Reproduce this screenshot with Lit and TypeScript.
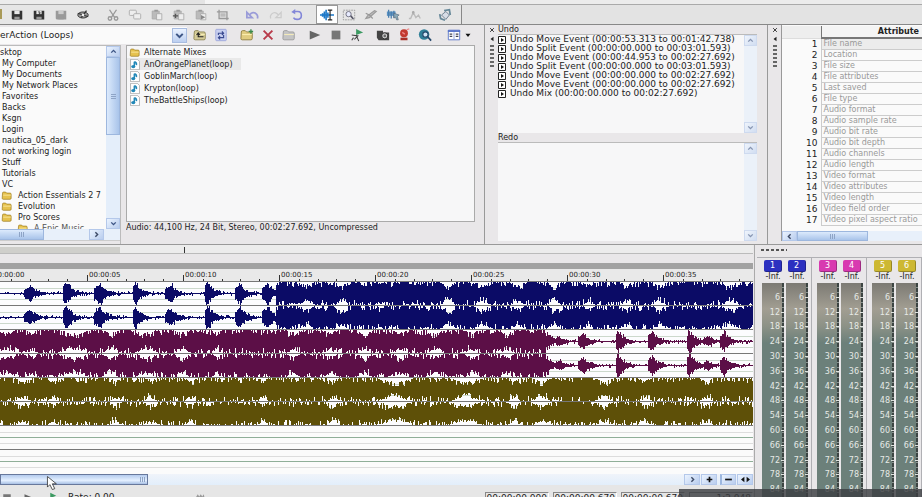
import { LitElement, html, svg, css } from "lit";
import { customElement } from "lit/decorators.js";

const folder = (c = "#e6c24e", e = "#9a7a1e") => svg`<path d="M1.5 4.5q0-1.5 1.5-1.5h3l1.500 1.500h5q1.500 0 1.500 1.500v6q0 1.500-1.500 1.500h-10q-1.500 0-1.500-1.500z" fill=${c} stroke=${e}/><path d="M2.500 7.500h11" stroke="#fff4b8"/>`;
const floppy = (c: string, l = "#e8e8e8") => svg`<path d="M2 3h12v10H3l-1-1z" fill=${c}/><path d="M5 3h6v4H5z" fill=${l}/><path d="M5 10h6v3H5z" fill="#999"/>`;
const clip = svg`<path d="M2.500 3.500h8v9h-8z" fill="#bbb" stroke="#aaa"/><path d="M5 2h4v2H5z" fill="#999"/><path d="M7.500 6.500h6v7h-6z" fill="#eee" stroke="#aaa"/>`;

const ICONS: Record<string, unknown> = {
  folder: folder(),
  save: floppy("#333"),
  saveAs: svg`${floppy("#333")}<path d="M7 4.500h2v2H8v2" stroke="#333" fill="none"/>`,
  saveOff: floppy("#999", "#ccc"),
  render: svg`<ellipse cx="8" cy="8" rx="6" ry="3.500" fill="#999" stroke="#333"/><path d="M2 6l12 4M6 11l6-8" stroke="#333" stroke-width="1.500"/><circle cx="8" cy="8" r="1.500" fill="#eee"/>`,
  cut: svg`<path d="M4 2l6 9M12 2L6 11" stroke="#999" stroke-width="1.500"/><circle cx="4.500" cy="12" r="2" fill="none" stroke="#999" stroke-width="1.500"/><circle cx="11.500" cy="12" r="2" fill="none" stroke="#999" stroke-width="1.500"/>`,
  copy: svg`<rect x="1.500" y="2.500" width="8" height="6" rx="1" fill="#eee" stroke="#aaa"/><rect x="6.500" y="6.500" width="8" height="6" rx="1" fill="#eee" stroke="#aaa"/>`,
  paste: clip,
  pasteMix: svg`${clip}<path d="M1 9h6M4 6.500v5" stroke="#555" stroke-width="1.500"/>`,
  pastePlay: svg`${clip}<path d="M8 8l5 2.500L8 13z" fill="#888"/>`,
  trim: svg`<path d="M3.500 2v10h11M1 4.500h11.500V14" fill="none" stroke="#999" stroke-width="1.500"/><path d="M5 6h6v4H5z" fill="#bbb"/>`,
  undo: svg`<path d="M1 5v6h6zM4 8q4-5 8-1 2 2 1 5" fill="none" stroke="#9a9cd8" stroke-width="2"/>`,
  redo: svg`<path d="M15 5v6H9zM12 8q-4-5-8-1-2 2-1 5" fill="none" stroke="#ccc" stroke-width="1.500"/>`,
  revert: svg`<path d="M5 4h4q4 0 4 4.500T8 13q-3 0-4-2" fill="none" stroke="#8286d8" stroke-width="1.800"/><path d="M1.500 4.500L6 1v6z" fill="#8286d8"/>`,
  select: svg`<path d="M0 8h16M3 6v4M5 4v8M7 2v12M9 5v6" stroke="#1d78c8" stroke-width="1.800"/><path d="M9 2.500h5M11.500 2.500v11M9 13.500h5" stroke="#222" stroke-width="1.300"/>`,
  zoom: svg`<rect x="1.500" y="2.500" width="13" height="11" fill="none" stroke="#999" stroke-dasharray="2 1"/><circle cx="7.500" cy="7" r="3" fill="#e8ecff" stroke="#667"/><path d="M10 9l3 3.500" stroke="#556" stroke-width="1.800"/>`,
  pencil: svg`<path d="M2 12l4-1 8-7-2-1-8 6zM2 6l4 2 4 4" fill="#bbb" stroke="#999" stroke-width="1.300"/>`,
  event: svg`<path d="M1 4h10v5H1z" fill="#5b93c4"/><path d="M3 2v9M6 4v8M9 3v8" stroke="#4a7fae" stroke-width="1.500"/><path d="M9 6l6 2-2 1.500 1 4h-2l-1-3-2 1z" fill="#8ab" stroke="#567" stroke-width=".7"/>`,
  envelope: svg`<path d="M1 12h2l3-7 3 6 3-3 2 4" fill="none" stroke="#bbb" stroke-width="1.500"/><circle cx="6" cy="5" r="1.500" fill="#aaa"/>`,
  script: svg`<path d="M4 8l5-4 4 4-4 5z" fill="#d7dde6" stroke="#678"/><path d="M2 7l1 5 5 2M7 3l6-1 1 6" fill="none" stroke="#689" stroke-width="2"/>`,
  up: svg`${folder("#d4cb98", "#8a8250")}<path d="M12 10H6V6M4 8l2-2.500L8 8" fill="none" stroke="#222" stroke-width="1.300"/>`,
  refresh: svg`<rect x="2" y="1.500" width="12" height="13" rx="1" fill="#c9d0f0" stroke="#9aa5dc"/><path d="M5 8V6h6M9 4l2 2-2 2M11 8v3H5M7 9l-2 2 2 2" fill="none" stroke="#3a4a90" stroke-width="1.300"/>`,
  newFolder: svg`${folder("#e0cc80", "#8c7a3a")}<path d="M10 4h5M12.500 1.500v5" stroke="#3a8a4a" stroke-width="1.500"/>`,
  remove: svg`<path d="M3 3l10 10M13 3L3 13" stroke="#b83a4a" stroke-width="2.200"/>`,
  folderOff: folder("#c4c4c4", "#999"),
  play: svg`<path d="M2 3l12 5-12 5z" fill="#666"/>`,
  stop: svg`<path d="M3 3h10v10H3z" fill="#777"/>`,
  autoPlay: svg`<path d="M7 1l8 4-8 3z" fill="#3c9a62"/><path d="M2 8l7 1-4 4M7 8l3 7M4 11l-2 3" fill="none" stroke="#444" stroke-width="1.200"/>`,
  camera: svg`<path d="M1 3h7v2h7v9H3L1 11z" fill="#444"/><circle cx="10" cy="9" r="3.500" fill="#ccc" stroke="#222"/><circle cx="10" cy="9" r="1.500" fill="#666"/>`,
  badge: svg`<circle cx="8" cy="6" r="4.500" fill="#c23a30"/><path d="M4 11h8v3H4z" fill="#a83028"/><path d="M11 2l3-1M6 5l3 2" stroke="#e88" stroke-width="1.500"/>`,
  web: svg`<circle cx="7" cy="7.500" r="6" fill="#2f7f98"/><circle cx="8.500" cy="7.500" r="3" fill="#cfe3f5" stroke="#24486a" stroke-width="1.300"/><path d="M11 10l4 4.500" stroke="#24486a" stroke-width="2"/>`,
  views: svg`<path d="M1.500 2.500h13v11h-13z" fill="#fff" stroke="#5570c8"/><path d="M1 3.500h14" stroke="#5570c8" stroke-width="2"/><path d="M3 7h3M3 9.500h3M10 7h3M10 9.500h3" stroke="#445" stroke-width="1.500"/><path d="M8 5v8" stroke="#8a9ad8"/>`,
  drop: svg`<path d="M4 6h8l-4 5z" fill="#111"/>`,
  note: svg`<path d="M1.500 .5h10l3 3v12h-13z" fill="#fff" stroke="#999"/><path d="M7 4v6M7 4q4 1 3 5" fill="none" stroke="#2288b8" stroke-width="2.200"/><ellipse cx="5.500" cy="11" rx="3" ry="2.300" fill="#2288b8"/>`,
  down: svg`<path d="M4 6l4 4 4-4" fill="none" stroke="#3d5585" stroke-width="2.500"/>`,
  upArrow: svg`<path d="M4 10l4-4 4 4" fill="none" stroke="#3d5585" stroke-width="2.500"/>`,
  left: svg`<path d="M10 4L6 8l4 4" fill="none" stroke="#3d4a65" stroke-width="2.500"/>`,
  right: svg`<path d="M6 4l4 4-4 4" fill="none" stroke="#3d4a65" stroke-width="2.500"/>`,
  plus: svg`<path d="M8 3v10M3 8h10" stroke="#111" stroke-width="3"/>`,
  minus: svg`<path d="M2 8h12" stroke="#111" stroke-width="3"/>`,
  both: svg`<path d="M6 3v10L0 8zM10 3v10l6-5z" fill="#111"/>`,
  entry: svg`<path d="M1 1h14v14H1z" fill="#fff" stroke="#222" stroke-width="2"/><path d="M6 4l6 4-6 4z" fill="#111"/>`,
  close: svg`<path d="M3 3l10 10M13 3L3 13" stroke="#333" stroke-width="2.500"/>`,
  pin: svg`<path d="M12 2v12L4 8z" fill="#222"/>`,
  pointer: svg`<path d="M3 0v13l3-3 3 6 3-1-3-6h5z" fill="#fff" stroke="#333"/>`,
  shuttle: svg`<path d="M0 16l2-8 3-5 2 3 2-3 2 3 2-3 3 13z" fill="#999"/>`,
};

const icon = (name: string) => html`<svg class="icon" viewBox="0 0 16 16" aria-hidden="true">${ICONS[name]}</svg>`;
const tool = (name: string, cls = "") => html`<button class="tool ${cls}" aria-label=${name}>${icon(name)}</button>`;

const TREE = ["My Computer", "My Documents", "My Network Places", "Favorites", "Backs", "Ksgn", "Login", "nautica_05_dark", "not working login", "Stuff", "Tutorials", "VC"];
const FOLDERS = ["Action Essentials 2 7", "Evolution", "Pro Scores"];
const FILES = ["AnOrangePlanet(loop)", "GoblinMarch(loop)", "Krypton(loop)", "TheBattleShips(loop)"];
const UNDO = [
  "Undo Move Event (00:00:53.313 to 00:01:42.738)",
  "Undo Split Event (00:00:00.000 to 00:03:01.593)",
  "Undo Move Event (00:00:44.953 to 00:02:27.692)",
  "Undo Split Event (00:00:00.000 to 00:03:01.593)",
  "Undo Move Event (00:00:00.000 to 00:02:27.692)",
  "Undo Move Event (00:00:00.000 to 00:02:27.692)",
  "Undo Mix (00:00:00.000 to 00:02:27.692)",
];
const ATTRIBUTES = ["File name", "Location", "File size", "File attributes", "Last saved", "File type", "Audio format", "Audio sample rate", "Audio bit rate", "Audio bit depth", "Audio channels", "Audio length", "Video format", "Video attributes", "Video length", "Video field order", "Video pixel aspect ratio"];
const TIMES = ["00:00:00", "00:00:05", "00:00:10", "00:00:15", "00:00:20", "00:00:25", "00:00:30", "00:00:35"];
const LEVELS = Array.from({ length: 14 }, (_, i) => (i + 1) * 6);
const METERS = [
  { tone: "blue", ids: [1, 2] },
  { tone: "pink", ids: [3, 4] },
  { tone: "gold", ids: [5, 6] },
];

/* A hit starts at `from`, is loudest at `at`, then decays. */
type Hit = [from: number, at: number, level: number];
/* A dip lowers a loud passage around `at`. */
type Dip = [at: number, width: number, depth: number];
interface Track { color: string; loud: [number, number]; hits: Hit[]; dips: Dip[] }

const WIDTH = 753;
const TRACKS: Track[] = [
  {
    color: "#0b0b66",
    loud: [276, WIDTH],
    hits: [[24, 30, 0.7], [63, 66, 1.1], [94, 100, 0.95], [133, 135, 1.1], [165, 171, 0.8], [205, 207, 1.2], [235, 240, 0.95], [262, 268, 0.95]],
    dips: [[306, 6, 0.45], [341, 5, 0.5], [380, 4, 0.2], [448, 6, 0.55], [482, 6, 0.45], [518, 6, 0.35], [554, 5, 0.55], [588, 5, 0.35], [626, 5, 0.4], [659, 5, 0.5], [730, 7, 0.5]],
  },
  {
    color: "#5c0f47",
    loud: [0, 546],
    hits: [[546, 547, 0.8], [556, 560, 0.3], [578, 583, 0.7], [616, 618, 1.1], [648, 652, 0.9], [687, 689, 1.1], [704, 708, 0.4], [720, 724, 0.8]],
    dips: [[6, 8, 0.45], [32, 4, 0.35], [74, 11, 0.5], [110, 6, 0.5], [146, 8, 0.45], [182, 6, 0.45], [216, 4, 0.35], [293, 6, 0.35], [330, 6, 0.35], [364, 6, 0.45], [400, 6, 0.4], [435, 6, 0.4], [472, 6, 0.4], [507, 5, 0.4]],
  },
  {
    color: "#5e5008",
    loud: [0, WIDTH],
    hits: [],
    dips: [[22, 6, 0.35], [53, 5, 0.3], [115, 5, 0.35], [150, 6, 0.3], [190, 5, 0.35], [263, 4, 0.4], [333, 5, 0.4], [395, 13, 0.55], [466, 12, 0.5], [514, 5, 0.35], [541, 7, 0.45], [604, 7, 0.4], [645, 6, 0.3], [706, 6, 0.35]],
  },
];

/* Small seeded generator, so each channel always has the same shape. */
function noise(seed: number): () => number {
  let s = seed;
  return () => {
    s = (s + 0x6d2b79f5) | 0;
    let t = Math.imul(s ^ (s >>> 15), 1 | s);
    t = (t + Math.imul(t ^ (t >>> 7), 61 | t)) ^ t;
    return ((t ^ (t >>> 14)) >>> 0) / 4294967296;
  };
}

function wavePath(t: Track, seed: number): string {
  const rnd = noise(seed);
  const level = (x: number) => {
    if (x >= t.loud[0] && x < t.loud[1]) {
      let a = 1.05 - 0.45 * rnd() ** 3;
      for (const [at, w, d] of t.dips) a -= d * Math.exp(-(((x - at) / w) ** 2)) * (0.5 + 0.6 * rnd());
      return Math.min(Math.max(a, 0.3), 1);
    }
    let a = 0.05 + 0.16 * rnd() ** 3;
    for (const [from, at, l] of t.hits) {
      if (x >= from && x <= at) a += l * (0.4 + (0.6 * (x - from + 1)) / (at - from + 1)) * (0.7 + 0.3 * rnd());
      else if (x > at && x < at + 34) a += l * Math.exp((at - x) / 6) * (0.5 + 0.6 * rnd());
    }
    return Math.min(a, 1);
  };
  let d = "";
  for (let x = 0; x < WIDTH; x++) {
    const top = Math.round(12 - level(x) * 12);
    const bottom = Math.max(Math.round(12 + level(x) * 12), top + 1);
    d += `M${x} ${top}h1V${bottom}h-1z`;
  }
  return d;
}

const CHANNELS = TRACKS.flatMap((t, i) => [0, 1].map((c) => ({ color: t.color, d: wavePath(t, 71 + i * 37 + c * 11) })));

@customElement("app-root")
export class AppRoot extends LitElement {
  static styles = css`
    :host { display: grid; grid-template-rows: 4px 21px minmax(0, 220fr) minmax(0, 252fr); height: 100vh; position: relative; overflow: hidden; background: #e9e7e9; color: #222; font: 8px/11px "DejaVu Sans", sans-serif; }
    * { box-sizing: border-box; }
    ul, ol { list-style: none; margin: 0; padding: 0; }
    button { font: inherit; color: inherit; padding: 0; margin: 0; border: 0; background: none; display: flex; align-items: center; justify-content: center; }
    .icon { width: 14px; height: 14px; display: block; flex: none; }
    .menu { background: linear-gradient(90deg, #ececec 130px, #fafafa 130px, #fafafa 170px, #e4e4e4 170px, #e4e4e4 205px, #f4f4f4 205px, #f4f4f4 310px, #ececec 310px); }
    .bar { display: flex; background: #e3e3e3; border-top: 1px solid #aaa; border-bottom: 1px solid #888; }
    .tools { display: flex; gap: 8px; padding-right: 5px; border-right: 1px solid #888; background: #e6e6e6; }
    .group { display: flex; }
    .edge { width: 2px; height: 10px; margin: 4px 4px 0 0; background: #a99a58; }
    .lead { display: flex; }
    .tool { width: 22px; }
    .on { border: 1px solid #999; background: #fff; }
    .main { display: grid; grid-template-columns: minmax(0, 485fr) minmax(0, 283fr) minmax(0, 154fr); grid-template-rows: minmax(0, 1fr); border-bottom: 1px solid #999; min-height: 0; }

    .explorer { display: grid; grid-template-rows: 20px minmax(0, 1fr); border-right: 1px solid #999; padding-right: 9px; min-height: 0; }
    .address { display: flex; gap: 5px; align-items: center; }
    .address .tool { width: 21px; }
    .combo { position: relative; width: 187px; height: 17px; flex: none; margin-right: -3px; }
    .combo select { appearance: none; width: 100%; height: 100%; border: 0; padding: 0 16px 0 0; background: #fafafa; font: inherit; font-size: 9px; color: #222; display: block; }
    .combo .icon { position: absolute; right: 0; top: 1px; width: 15px; height: 15px; background: linear-gradient(#eaf2ff, #bccff0); border: 1px solid #a8bce0; pointer-events: none; }
    .views { display: flex; align-items: center; padding-left: 7px; }
    .views .icon + .icon { width: 10px; height: 10px; margin-left: 2px; }
    .browse { display: grid; grid-template-columns: 121px minmax(0, 1fr); grid-template-rows: minmax(0, 1fr); gap: 5px; min-height: 0; }
    .treebox { display: grid; grid-template-columns: minmax(0, 1fr) 14px; grid-template-rows: minmax(0, 1fr) 11px 4px; background: #fafafa; border-top: 1px solid #bbb; border-right: 1px solid #bbb; min-height: 0; }
    .tree { overflow: hidden; padding-top: 1px; min-height: 0; }
    .tree li { height: 11px; padding-left: 2px; white-space: nowrap; display: flex; align-items: center; gap: 4px; }
    .tree li.root { padding-left: 0; }
    .tree li.dir { padding-left: 0; }
    .tree li.sub { padding-left: 16px; color: #555; }
    .v { display: flex; flex-direction: column; background: #e4eefa; min-height: 0; }
    .v button, .h button { background: linear-gradient(135deg, #eaf3ff, #b9cdee); border: 1px solid #b4c8ea; }
    .v button { height: 11px; flex: none; }
    .v .icon { width: 9px; height: 9px; }
    .vthumb { flex: 0 1 78px; background: linear-gradient(90deg, #dceafc, #a9c4ea); border: 1px solid #9db7de; display: grid; place-items: center; }
    .grip { width: 5px; height: 5px; background: repeating-linear-gradient(#8ea4c6 0 1px, transparent 1px 2px); }
    .grip.turn { background: repeating-linear-gradient(90deg, #8ea4c6 0 1px, transparent 1px 2px); }
    .rest { flex: 1; }
    .h { display: flex; background: #e8f0fa; min-width: 0; }
    .h .icon { width: 9px; height: 9px; }
    .h button { width: 15px; flex: none; }
    .treebox .h { grid-column: 1 / -1; padding-right: 16px; }
    .hthumb { flex: none; background: linear-gradient(#dceafc, #a9c4ea); border: 1px solid #9db7de; display: grid; place-items: center; }
    .treebox .hthumb { width: 44px; border-left: 0; }
    .pad { grid-column: 1 / -1; background: #e9e7e9; border-top: 1px solid #ccc; }
    .filebox { display: grid; grid-template-rows: minmax(0, 1fr) 22px; min-height: 0; }
    .files { background: #f7f7f8; border: 1px solid #aaa; }
    .files li { display: flex; align-items: center; gap: 2px; height: 12px; width: 114px; padding-left: 1px; white-space: nowrap; }
    .files li .icon, .tree li .icon { width: 14px; height: 11px; }
    .files .picked { background: #e9e9e9; }
    .status { white-space: nowrap; overflow: hidden; }

    .history { display: grid; grid-template-columns: 13px minmax(0, 1fr); grid-template-rows: minmax(0, 1fr); padding-right: 10px; border-right: 1px solid #999; min-height: 0; }
    .handle { display: flex; flex-direction: column; align-items: center; gap: 3px; padding-top: 2px; }
    .handle .icon { width: 6px; height: 6px; }
    .dots { width: 4px; height: 22px; background: repeating-linear-gradient(#666 0 2px, transparent 2px 4px); }
    .stacks { display: grid; grid-template-rows: 10px minmax(0, 98fr) 10px minmax(0, 98fr) 3px; min-width: 0; min-height: 0; }
    .stacks h2 { font: inherit; line-height: 10px; margin: 0; border-bottom: 1px solid #bbb; }
    .stack { display: grid; grid-template-columns: minmax(0, 1fr) 13px; grid-template-rows: minmax(0, 1fr); background: #f7f7f8; min-height: 0; }
    .stack .v { opacity: .6; }
    .stack li { display: flex; align-items: center; gap: 4px; height: 9px; line-height: 9px; font-size: 9px; white-space: nowrap; }
    .stack li .icon { width: 8px; height: 8px; }

    .attrs { display: grid; grid-template-columns: 13px minmax(0, 1fr); grid-template-rows: minmax(0, 1fr); padding-bottom: 3px; min-height: 0; }
    .sheet { display: grid; grid-template-rows: minmax(0, 1fr) 10px; border-left: 1px solid #999; background: #fafafa; min-height: 0; }
    .clip { overflow: hidden; padding-top: 1px; min-height: 0; }
    table { border-collapse: collapse; table-layout: fixed; width: 100%; white-space: nowrap; }
    td, th { padding: 0; height: 11px; line-height: 10px; font-weight: normal; overflow: hidden; }
    thead th { height: 12px; border: 1px solid #777; border-width: 0 0 2px 1px; text-align: right; font-weight: bold; background: #f4f4f4; padding-right: 3px; }
    thead td { width: 39px; background: #eee; border-bottom: 1px solid #ddd; }
    tbody th { text-align: right; padding-right: 3px; font-size: 9px; }
    tbody td { color: #999; border: 1px solid #ccc; border-width: 0 0 1px 1px; padding-left: 2px; }
    tbody tr:first-child td { background: #ececec; }
    .sheet .hthumb { width: 71px; }

    .lower { display: grid; grid-template-columns: minmax(0, 755fr) minmax(0, 167fr); grid-template-rows: minmax(0, 1fr); min-height: 0; }
    .editor { display: grid; grid-template-columns: minmax(0, 1fr); grid-template-rows: 9px 9px 6px 13px minmax(0, 1fr) 11px 12px; border-right: 1px solid #aaa; padding-right: 1px; min-height: 0; }
    .overview { display: flex; background: #ececec; border-bottom: 1px solid #bbb; padding-top: 2px; }
    .seen { width: 15.9%; background: #cfcfcb; }
    .mark { width: 1px; margin-left: 8.6%; background: #333; }
    .strip { background: #a2a2a2; }
    .ruler { display: flex; overflow: hidden; margin-left: -9px; background: #e9e9e9; border-bottom: 1px solid #777; }
    .time { flex: 0 0 12.6%; font-size: 7px; line-height: 12px; padding-left: 1px; background: linear-gradient(#333, #333) 20% 100% / 1px 2px no-repeat, linear-gradient(#333, #333) 40% 100% / 1px 2px no-repeat, linear-gradient(#333, #333) 60% 100% / 1px 2px no-repeat, linear-gradient(#333, #333) 80% 100% / 1px 2px no-repeat; border-image: linear-gradient(transparent 50%, #333 50%) 1; border-style: solid; border-width: 0 0 0 1px; }
    .tracks { display: grid; grid-auto-rows: minmax(0, 1fr); min-height: 0; }
    .channel { border-bottom: 1px solid #777; background: linear-gradient(transparent 25%, #ccd8cc 25%, #ccd8cc 29%, transparent 29%, transparent 73%, #ccd8cc 73%, #ccd8cc 77%, transparent 77%), #fcfcfe; min-height: 0; display: block; }
    .channel.silent { background: linear-gradient(transparent 25%, #ddd 25%, #ddd 29%, transparent 29%, transparent 50%, #8fae98 50%, #8fae98 54%, transparent 54%, transparent 74%, #ddd 74%, #ddd 78%, transparent 78%), #fbfbfb; }
    .channel:last-child { border-bottom-color: transparent; }
    .wave { width: 100%; height: 100%; display: block; }
    .scroll { position: relative; gap: 1px; background: linear-gradient(#f0f4fa, #e2eefb); }
    .scroll .hthumb { width: 19.6%; border: 1px solid #67789c; background: linear-gradient(#b4cbee, #e4f0ff 60%, #a8c0e4); justify-items: end; padding-right: 2px; }
    .scroll button { width: 16px; }
    .scroll button:nth-of-type(3) { margin-left: 2px; border-left: 2px solid #9db7de; }
    .cursor { position: absolute; left: 45px; top: 2px; z-index: 1; }
    .scroll .cursor .icon { width: 13px; height: 14px; }
    .transport { display: flex; overflow: hidden; background: #e6e6e6; gap: 4px; padding-top: 7px; font-size: 9px; }
    .transport .icon { margin-right: 4px; width: 14px; height: 12px; }
    .transport .rate { margin: 0 71px 0 2px; white-space: nowrap; }
    .transport .rate + .icon { width: 20px; }
    .box { width: 64px; height: 12px; border: 1px solid #888; border-right-color: #fff; text-align: right; padding-right: 1px; flex: none; }
    .push { margin-left: auto; }

    .mixer { display: grid; grid-template-rows: 12px minmax(0, 1fr); padding-left: 2px; min-height: 0; }
    .mixer .dots { width: 26px; height: 2px; margin: 4px; background: repeating-linear-gradient(90deg, #555 0 3px, transparent 3px 5px); }
    .pairs { display: grid; grid-template-columns: repeat(3, minmax(0, 1fr)); grid-template-rows: minmax(0, 1fr); min-height: 0; }
    .pair { display: grid; grid-template-columns: 1fr 1fr; grid-template-rows: minmax(0, 1fr); gap: 2px; padding: 2px 3px 0 5px; border: 1px solid #b0b0b4; border-width: 1px 1px 0 0; min-height: 0; }
    .meter { display: grid; grid-template-rows: 12px 11px minmax(0, 1fr); min-height: 0; text-align: center; }
    .meter button { width: 18px; border-radius: 2px; color: #fff; border-bottom: 1px solid #0004; border-right: 1px solid #0004; line-height: 11px; justify-self: center; }
    .blue button { background: #2c30c0; }
    .pink button { background: #d83ab0; }
    .gold button { background: #cdb832; }
    .inf { line-height: 10px; }
    .scale { display: grid; grid-template-rows: repeat(14, minmax(0, 1fr)); padding-top: 7px; background: repeating-linear-gradient(transparent 0 4px, #8a9490 4px 5px) 100% 0 / 2px 100% no-repeat, linear-gradient(90deg, transparent calc(100% - 2px), #3c4442 calc(100% - 2px)), linear-gradient(#7c7a74, #a29e92 12%, #8d9287 20%, #6c807a 28%, #6c807a); color: #e6eae6; min-height: 0; }
    .scale li { display: flex; align-items: center; justify-content: flex-end; gap: 1px; }
    .scale li::after { content: ""; width: 3px; height: 1px; background: #dde2de; }
    .shade { position: absolute; left: 73.6%; right: 0; bottom: 0; height: 8px; background: rgba(60, 62, 66, .82); }
  `;

  vbar(thumb: boolean) {
    return html`<div class="v"><button aria-label="Scroll up">${icon("upArrow")}</button>${thumb ? html`<div class="vthumb"><span class="grip"></span></div>` : ""}<span class="rest"></span><button aria-label="Scroll down">${icon("down")}</button></div>`;
  }

  render() {
    return html`
      <div class="menu"></div>
      <header class="bar">
        <div class="tools">
          <div class="lead"><span class="edge"></span><div class="group">${["save", "saveAs", "saveOff", "render"].map((n) => tool(n))}</div></div>
          <div class="group">${["cut", "copy", "paste", "pasteMix", "pastePlay", "trim"].map((n) => tool(n))}</div>
          <div class="group">${["undo", "redo", "revert"].map((n) => tool(n))}</div>
          <div class="group">${tool("select", "on")}${["zoom", "pencil", "event", "envelope"].map((n) => tool(n))}</div>
          <div class="group">${tool("script")}</div>
        </div>
      </header>
      <main class="main">
        <section class="explorer">
          <div class="address">
            <label class="combo"><select aria-label="Folder"><option>erAction (Loops)</option></select>${icon("down")}</label>
            <div class="group">${tool("up")}${tool("refresh")}</div>
            <div class="group">${tool("newFolder")}${tool("remove")}${tool("folderOff")}</div>
            <div class="group">${tool("play")}${tool("stop")}${tool("autoPlay")}</div>
            <div class="group">${tool("camera")}${tool("badge")}${tool("web")}</div>
            <button class="views" aria-label="Views">${icon("views")}${icon("drop")}</button>
          </div>
          <div class="browse">
            <div class="treebox">
              <ul class="tree">
                <li class="root">sktop</li>
                ${TREE.map((n) => html`<li>${n}</li>`)}
                ${FOLDERS.map((n) => html`<li class="dir">${icon("folder")}${n}</li>`)}
                <li class="sub">${icon("folder")}A Epic Music</li>
              </ul>
              ${this.vbar(true)}
              <div class="h"><div class="hthumb"><span class="grip turn"></span></div><span class="rest"></span><button aria-label="Scroll right">${icon("right")}</button></div>
              <div class="pad"></div>
            </div>
            <div class="filebox">
              <ul class="files">
                <li>${icon("folder")}Alternate Mixes</li>
                ${FILES.map((n, i) => html`<li class=${i ? "" : "picked"}>${icon("note")}${n}</li>`)}
              </ul>
              <div class="status">Audio: 44,100 Hz, 24 Bit, Stereo, 00:02:27.692, Uncompressed</div>
            </div>
          </div>
        </section>
        <section class="history">
          <div class="handle">${icon("close")}${icon("pin")}<span class="dots"></span></div>
          <div class="stacks">
            <h2>Undo</h2>
            <div class="stack"><ol>${UNDO.map((u) => html`<li>${icon("entry")}${u}</li>`)}</ol>${this.vbar(false)}</div>
            <h2>Redo</h2>
            <div class="stack"><ol></ol>${this.vbar(false)}</div>
          </div>
        </section>
        <section class="attrs">
          <div class="handle">${icon("close")}${icon("pin")}<span class="dots"></span></div>
          <div class="sheet">
            <div class="clip">
              <table>
                <thead><tr><td></td><th scope="col">Attribute</th></tr></thead>
                <tbody>${ATTRIBUTES.map((a, i) => html`<tr><th scope="row">${i + 1}</th><td>${a}</td></tr>`)}</tbody>
              </table>
            </div>
            <div class="h"><button aria-label="Scroll left">${icon("left")}</button><div class="hthumb"><span class="grip turn"></span></div></div>
          </div>
        </section>
      </main>
      <div class="lower">
        <section class="editor">
          <div class="overview"><span class="seen"></span><span class="mark"></span></div>
          <div></div>
          <div class="strip"></div>
          <div class="ruler">${TIMES.map((t) => html`<span class="time">${t}</span>`)}</div>
          <div class="tracks">
            ${CHANNELS.map((c) => html`<div class="channel"><svg class="wave" viewBox="0 0 753 24" preserveAspectRatio="none" shape-rendering="crispEdges"><path d=${c.d} fill=${c.color}></path></svg></div>`)}
            <div class="channel silent"></div>
            <div class="channel silent"></div>
          </div>
          <div class="h scroll">
            <div class="hthumb"><span class="grip turn"></span></div><span class="rest"></span>
            <button aria-label="Scroll right">${icon("right")}</button><button aria-label="Zoom in">${icon("plus")}</button><button aria-label="Zoom out">${icon("minus")}</button><button aria-label="Fit">${icon("both")}</button>
            <span class="cursor">${icon("pointer")}</span>
          </div>
          <div class="transport">
            ${icon("stop")}${icon("play")}${icon("autoPlay")}
            <span class="rate">Rate: 0.00</span>${icon("shuttle")}
            <span class="box push">00:00:00.000</span><span class="box">00:00:00.670</span><span class="box">00:00:00.670</span><span class="box">1:2,048</span>
          </div>
        </section>
        <section class="mixer">
          <span class="dots"></span>
          <div class="pairs">
            ${METERS.map((m) => html`<div class="pair ${m.tone}">${m.ids.map((id) => html`
              <div class="meter"><button>${id}</button><span class="inf">-Inf.</span><ul class="scale">${LEVELS.map((l) => html`<li>${l}</li>`)}</ul></div>`)}</div>`)}
          </div>
        </section>
      </div>
      <div class="shade"></div>
    `;
  }
}
